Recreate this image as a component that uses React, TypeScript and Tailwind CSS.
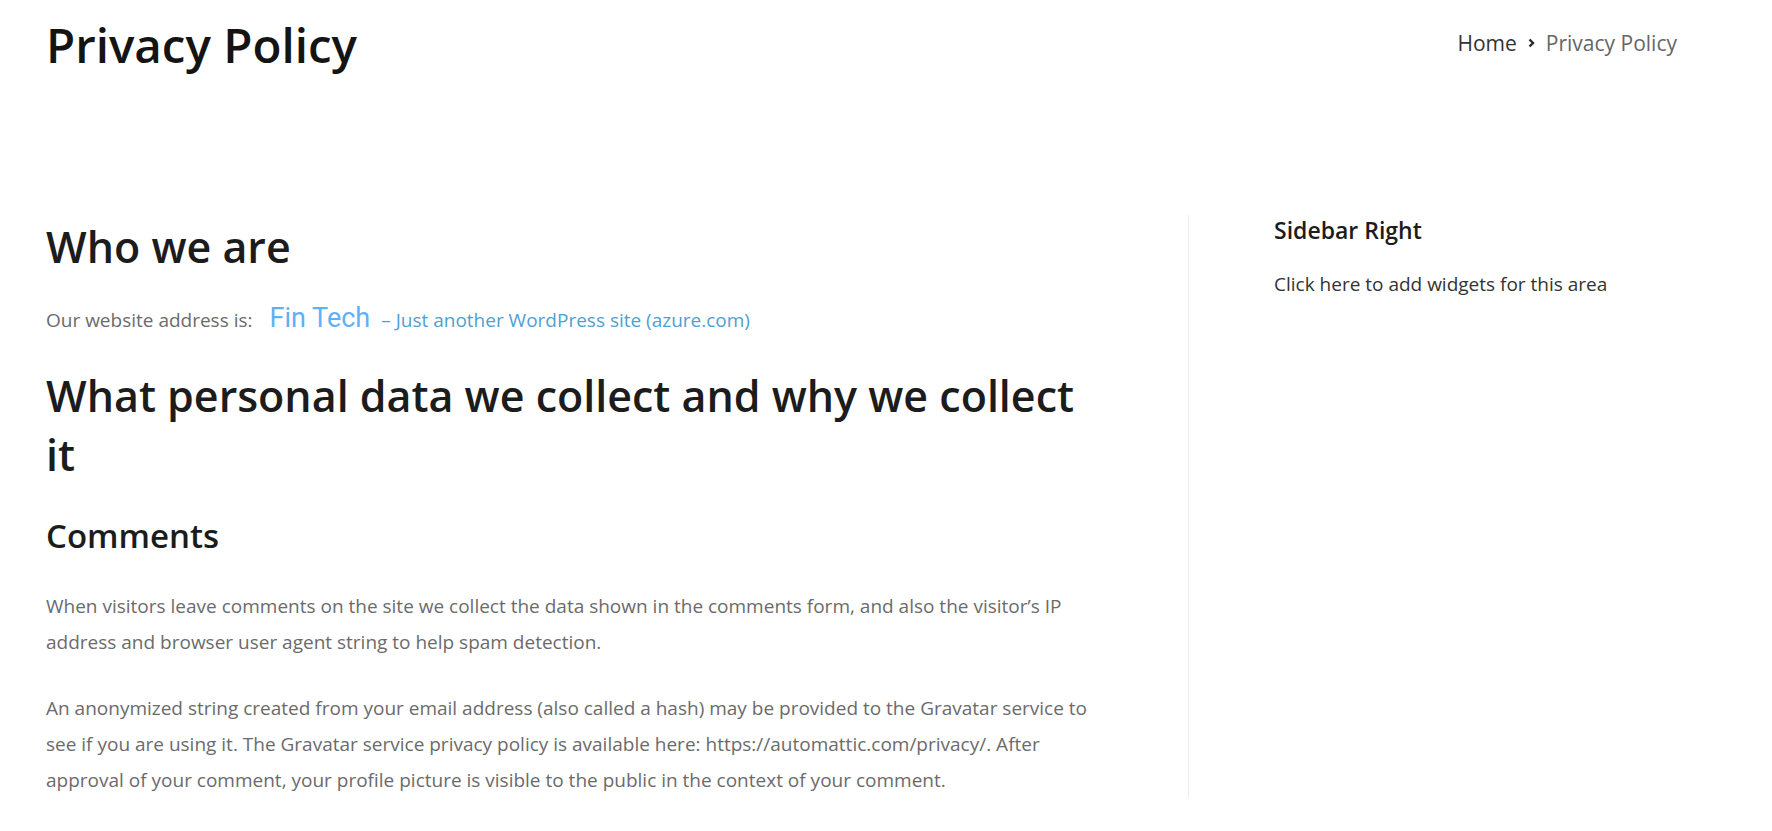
export default function App() {
  return (
    <div className="min-h-[831px] bg-white font-['Open_Sans',sans-serif]">
      {/* Page header */}
      <header className="flex items-start justify-between pl-[46px] pr-[95px]">
        <h1 className="pt-[14px] text-[47.5px] font-semibold leading-[61px] text-[#141414]">
          Privacy Policy
        </h1>
        <nav className="flex items-center pt-[29px] text-[21px] leading-[28px]">
          <a className="text-[#333]">Home</a>
          <svg className="mx-[10px] h-[12px] w-[9px]" viewBox="0 0 9 12">
            <path d="M2.5 2.5 6 6l-3.5 3.5" fill="none" stroke="#2a2a2a" strokeWidth="2.4" />
          </svg>
          <span className="text-[#666]">Privacy Policy</span>
        </nav>
      </header>

      <div className="mt-[140px] flex pl-[46px]">
        {/* Main content */}
        <main className="w-[1143px] border-r border-[#ececec] pr-[89px]">
          <h2 className="pt-[2px] text-[43px] font-semibold leading-[59px] text-[#1c1c1c]">
            Who we are
          </h2>
          <p className="mt-[26px] text-[19px] leading-[36px] text-[#6b6b6b]">
            Our website address is:
            <a className="ml-[17px] font-['Roboto',sans-serif] text-[27px] leading-none text-[#5fb0f7]">
              Fin Tech
            </a>
            <a className="ml-[11px] text-[#4f9fd2]">– Just another WordPress site (azure.com)</a>
          </p>

          <h2 className="mt-[28px] text-[43px] font-semibold leading-[59px] text-[#1c1c1c]">
            What personal data we collect and why we collect it
          </h2>

          <h3 className="mt-[30px] text-[33px] font-semibold leading-[43px] text-[#1c1c1c]">
            Comments
          </h3>
          <p className="mt-[31px] text-[19px] leading-[36px] text-[#6b6b6b]">
            When visitors leave comments on the site we collect the data shown in the comments form,
            and also the visitor’s IP address and browser user agent string to help spam detection.
          </p>
          <p className="mt-[30px] text-[19px] leading-[36px] text-[#6b6b6b]">
            An anonymized string created from your email address (also called a hash) may be
            provided to the Gravatar service to see if you are using it. The Gravatar service
            privacy policy is available here: https://automattic.com/privacy/. After approval of
            your comment, your profile picture is visible to the public in the context of your
            comment.
          </p>
        </main>

        {/* Sidebar */}
        <aside className="pl-[85px]">
          <h4 className="text-[23px] font-semibold leading-[30px] text-[#1c1c1c]">
            Sidebar Right
          </h4>
          <p className="mt-[24px] text-[19px] leading-[30px] text-[#333]">
            Click here to add widgets for this area
          </p>
        </aside>
      </div>
    </div>
  );
}
